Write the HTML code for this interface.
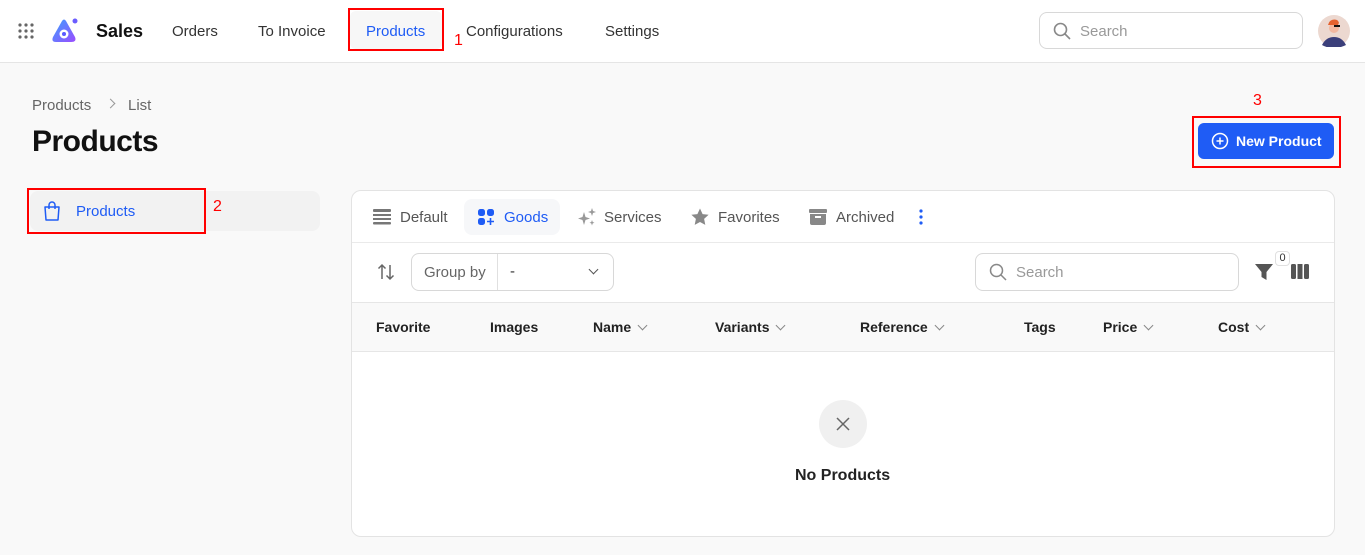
<!DOCTYPE html>
<html><head><meta charset="utf-8"><style>
*{box-sizing:border-box;margin:0;padding:0}
body{width:1365px;height:555px;overflow:hidden;background:#f9f9f9;font-family:"Liberation Sans",sans-serif;color:#111;position:relative}
.a{position:absolute}
.hdr{left:0;top:0;width:1365px;height:63px;background:#fff;border-bottom:1px solid #e5e5e5}
.nav{font-size:15px;color:#333;top:23px}
.red{border:2px solid #f00}
.th{top:319px;font-size:14px;font-weight:bold;color:#222}
.chev{display:inline-block;width:7px;height:7px;border-right:1.5px solid #888;border-bottom:1.5px solid #888;transform:rotate(45deg);margin-left:8px;position:relative;top:-3px}
.tab{top:209px;font-size:15px;color:#555}
</style></head><body>
<div class="a hdr"></div>
<svg class="a" style="left:18px;top:23px" width="16" height="16"><g fill="#666"><circle cx="2" cy="2" r="1.6"/><circle cx="8" cy="2" r="1.6"/><circle cx="14" cy="2" r="1.6"/><circle cx="2" cy="8" r="1.6"/><circle cx="8" cy="8" r="1.6"/><circle cx="14" cy="8" r="1.6"/><circle cx="2" cy="14" r="1.6"/><circle cx="8" cy="14" r="1.6"/><circle cx="14" cy="14" r="1.6"/></g></svg>
<svg class="a" style="left:51px;top:18px" width="28" height="26"><defs><linearGradient id="g" x1="0" y1="0" x2="1" y2="1"><stop offset="0" stop-color="#3aa0ff"/><stop offset="1" stop-color="#9b4dff"/></linearGradient></defs><path d="M11 3 Q13 0 15 3 L24 19 Q26 24 20 24 H5 Q0 24 2 19 Z" fill="url(#g)"/><circle cx="13" cy="16" r="4.5" fill="#fff"/><circle cx="13" cy="16" r="2" fill="#5a5aff"/><circle cx="24" cy="3" r="2.5" fill="#6b5cff"/></svg>
<div class="a" style="left:96px;top:21px;font-size:18px;font-weight:bold">Sales</div>
<div class="a nav" style="left:172px">Orders</div>
<div class="a nav" style="left:258px">To Invoice</div>
<div class="a" style="left:350px;top:11px;width:92px;height:38px;background:#f7f7f7;border-radius:6px"></div>
<div class="a nav" style="left:366px;color:#1f5cf5">Products</div>
<div class="a red" style="left:348px;top:8px;width:96px;height:43px"></div>
<div class="a" style="left:454px;top:32px;color:#f00;font-size:16px">1</div>
<div class="a nav" style="left:466px">Configurations</div>
<div class="a nav" style="left:605px">Settings</div>
<div class="a" style="left:1039px;top:12px;width:264px;height:37px;border:1px solid #d8d8d8;border-radius:8px;background:#fff"></div>
<svg class="a" style="left:1053px;top:22px" width="18" height="18"><circle cx="7.5" cy="7.5" r="6" fill="none" stroke="#888" stroke-width="1.6"/><path d="M12 12l5 5" stroke="#888" stroke-width="1.6"/></svg>
<div class="a" style="left:1080px;top:23px;font-size:15px;color:#999">Search</div>
<svg class="a" style="left:1318px;top:15px" width="32" height="32"><circle cx="16" cy="16" r="16" fill="#ecd8d0"/><path d="M4 30 Q8 22 16 22 Q24 22 28 30 Q22 33 16 33 Q9 33 4 30Z" fill="#3b3f7a"/><circle cx="16" cy="13" r="5" fill="#f2b8a0"/><path d="M10 10 Q12 3 19 5 Q22 7 20 10 Z" fill="#e4622f"/><rect x="16" y="10" width="6" height="2" fill="#111"/></svg>

<div class="a" style="left:32px;top:97px;font-size:15px;color:#666">Products</div>
<div class="a" style="left:107px;top:100px;width:7px;height:7px;border-right:1.5px solid #999;border-top:1.5px solid #999;transform:rotate(45deg)"></div>
<div class="a" style="left:128px;top:97px;font-size:15px;color:#666">List</div>
<div class="a" style="left:32px;top:125px;font-size:30px;font-weight:bold;letter-spacing:-0.5px">Products</div>

<div class="a" style="left:1253px;top:92px;color:#f00;font-size:16px">3</div>
<div class="a" style="left:1198px;top:123px;width:136px;height:36px;background:#1f5cf5;border-radius:6px"></div>
<svg class="a" style="left:1211px;top:132px" width="18" height="18"><circle cx="9" cy="9" r="7.5" fill="none" stroke="#fff" stroke-width="1.5"/><path d="M9 5.5v7M5.5 9h7" stroke="#fff" stroke-width="1.5"/></svg>
<div class="a" style="left:1236px;top:133px;font-size:14px;color:#fff;font-weight:bold">New Product</div>
<div class="a red" style="left:1192px;top:116px;width:149px;height:52px"></div>

<div class="a" style="left:30px;top:191px;width:290px;height:40px;background:#f2f2f2;border-radius:8px"></div>
<svg class="a" style="left:42px;top:200px" width="20" height="22"><path d="M3 7h14l-1 13H4Z" fill="none" stroke="#1f5cf5" stroke-width="1.5" stroke-linejoin="round"/><path d="M7 9V5a3 3 0 0 1 6 0v4" fill="none" stroke="#1f5cf5" stroke-width="1.5"/></svg>
<div class="a" style="left:76px;top:203px;font-size:15px;color:#1f5cf5">Products</div>
<div class="a red" style="left:27px;top:188px;width:179px;height:46px"></div>
<div class="a" style="left:213px;top:198px;color:#f00;font-size:16px">2</div>

<div class="a" style="left:351px;top:190px;width:984px;height:347px;background:#fff;border:1px solid #e3e3e3;border-radius:10px"></div>
<div class="a" style="left:352px;top:242px;width:982px;height:1px;background:#eaeaea"></div>
<svg class="a" style="left:373px;top:209px" width="18" height="16"><g fill="#777"><rect y="0" width="18" height="3" rx="1"/><rect y="5" width="18" height="2"/><rect y="9" width="18" height="2"/><rect y="13" width="18" height="2.5" rx="1"/></g></svg>
<div class="a tab" style="left:400px">Default</div>
<div class="a" style="left:464px;top:199px;width:96px;height:36px;background:#f6f7f9;border-radius:8px"></div>
<svg class="a" style="left:478px;top:209px" width="17" height="17"><g fill="#1f5cf5"><rect x="0" y="0" width="7" height="7" rx="2.5"/><rect x="9" y="0" width="7" height="7" rx="2.5"/><rect x="0" y="9" width="7" height="7" rx="2.5"/><path d="M12.5 9v7M9 12.5h7" stroke="#1f5cf5" stroke-width="1.6"/></g></svg>
<div class="a tab" style="left:504px;color:#1f5cf5">Goods</div>
<svg class="a" style="left:577px;top:207px" width="20" height="20"><g fill="#999"><path d="M7 5 L8.5 10 L13 11.5 L8.5 13 L7 18 L5.5 13 L1 11.5 L5.5 10Z"/><path d="M15 1 L16 4 L19 5 L16 6 L15 9 L14 6 L11 5 L14 4Z"/><path d="M15 13 L15.7 15 L17.5 15.7 L15.7 16.4 L15 18.5 L14.3 16.4 L12.5 15.7 L14.3 15Z"/></g></svg>
<div class="a tab" style="left:604px">Services</div>
<svg class="a" style="left:690px;top:207px" width="20" height="20"><path d="M10 1.5l2.6 5.6 6 .7-4.5 4.1 1.2 6L10 15l-5.3 2.9 1.2-6L1.4 7.8l6-.7Z" fill="#888"/></svg>
<div class="a tab" style="left:718px">Favorites</div>
<svg class="a" style="left:808px;top:208px" width="20" height="18"><rect x="1" y="1" width="18" height="4" rx="1" fill="#888"/><path d="M2 6h16v9a2 2 0 0 1-2 2H4a2 2 0 0 1-2-2Z" fill="#888"/><rect x="7" y="8" width="6" height="2" fill="#fff"/></svg>
<div class="a tab" style="left:836px">Archived</div>
<svg class="a" style="left:918px;top:208px" width="6" height="18"><g fill="#1f5cf5"><circle cx="3" cy="3" r="1.6"/><circle cx="3" cy="9" r="1.6"/><circle cx="3" cy="15" r="1.6"/></g></svg>

<svg class="a" style="left:376px;top:262px" width="20" height="20"><g fill="none" stroke="#666" stroke-width="1.5"><path d="M6 17V3M2.5 6.5L6 3l3.5 3.5"/><path d="M14 3v14M10.5 13.5L14 17l3.5-3.5"/></g></svg>
<div class="a" style="left:411px;top:253px;width:203px;height:38px;border:1px solid #d8d8d8;border-radius:8px;background:#fff"></div>
<div class="a" style="left:497px;top:254px;width:1px;height:36px;background:#e0e0e0"></div>
<div class="a" style="left:424px;top:264px;font-size:15px;color:#666">Group by</div>
<div class="a" style="left:510px;top:263px;font-size:15px;color:#333">-</div>
<div class="a" style="left:590px;top:266px;width:7px;height:7px;border-right:1.5px solid #555;border-bottom:1.5px solid #555;transform:rotate(45deg)"></div>
<div class="a" style="left:975px;top:253px;width:264px;height:38px;border:1px solid #d8d8d8;border-radius:8px;background:#fff"></div>
<svg class="a" style="left:989px;top:263px" width="18" height="18"><circle cx="7.5" cy="7.5" r="6" fill="none" stroke="#888" stroke-width="1.5"/><path d="M12 12l5 5" stroke="#888" stroke-width="1.5"/></svg>
<div class="a" style="left:1016px;top:264px;font-size:15px;color:#999">Search</div>
<svg class="a" style="left:1255px;top:263px" width="18" height="18"><path d="M0 1h18l-6.5 8v8l-5-3V9Z" fill="#555"/></svg>
<div class="a" style="left:1275px;top:251px;width:15px;height:15px;border:1px solid #e0e0e0;border-radius:4px;background:#fff;font-size:11px;text-align:center;line-height:13px;color:#333">0</div>
<svg class="a" style="left:1291px;top:264px" width="18" height="16"><g fill="#555"><rect x="0" y="0" width="5" height="15" rx="1.5"/><rect x="6.5" y="0" width="5" height="15"/><rect x="13" y="0" width="5" height="15" rx="1.5"/></g></svg>

<div class="a" style="left:352px;top:302px;width:982px;height:50px;background:#f9f9f9;border-top:1px solid #e6e6e6;border-bottom:1px solid #e6e6e6"></div>
<div class="a th" style="left:376px">Favorite</div>
<div class="a th" style="left:490px">Images</div>
<div class="a th" style="left:593px">Name<span class="chev"></span></div>
<div class="a th" style="left:715px">Variants<span class="chev"></span></div>
<div class="a th" style="left:860px">Reference<span class="chev"></span></div>
<div class="a th" style="left:1024px">Tags</div>
<div class="a th" style="left:1103px">Price<span class="chev"></span></div>
<div class="a th" style="left:1218px">Cost<span class="chev"></span></div>

<div class="a" style="left:819px;top:400px;width:48px;height:48px;border-radius:50%;background:#f0f0f0"></div>
<svg class="a" style="left:835px;top:416px" width="16" height="16"><path d="M2 2l12 12M14 2L2 14" stroke="#666" stroke-width="1.5"/></svg>
<div class="a" style="left:795px;top:467px;font-size:16px;font-weight:bold;color:#222">No Products</div>
</body></html>
